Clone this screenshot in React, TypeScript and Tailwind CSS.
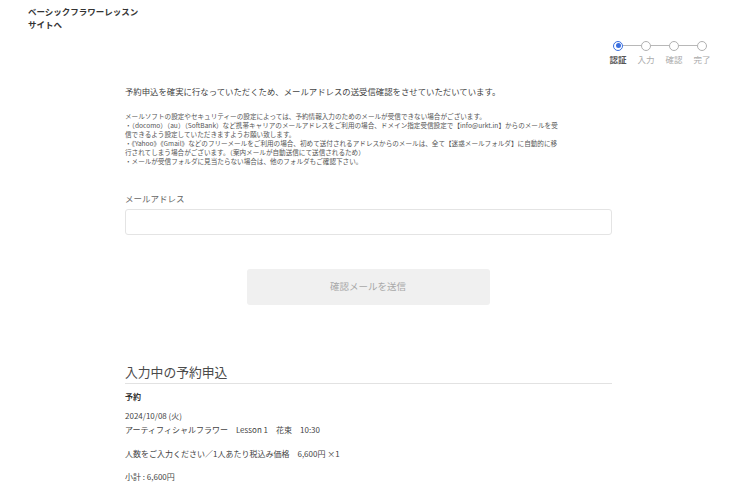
import React from "react";

const steps = ["認証", "入力", "確認", "完了"];

function Stepper() {
  return (
    <div className="flex">
      {steps.map((s, i) => (
        <div key={s} className="w-[28px] flex flex-col items-center">
          <div className="flex items-center w-full h-[11px]">
            <div className={i === 0 ? "flex-1 h-px" : "flex-1 h-px bg-[#b8b8b8]"} />
            {i === 0 ? (
              <div className="w-[10px] h-[10px] rounded-full border border-[#3a6fe0] bg-white flex items-center justify-center">
                <div className="w-[5px] h-[5px] rounded-full bg-[#3a6fe0]" />
              </div>
            ) : (
              <div className="w-[10px] h-[10px] rounded-full border border-[#b0b0b0] bg-white" />
            )}
            <div className={i === steps.length - 1 ? "flex-1 h-px" : "flex-1 h-px bg-[#b8b8b8]"} />
          </div>
          <div
            className={
              i === 0
                ? "mt-[3px] text-[8.5px] leading-[10px] font-bold text-[#555]"
                : "mt-[3px] text-[8.5px] leading-[10px] text-[#aaa]"
            }
          >
            {s}
          </div>
        </div>
      ))}
    </div>
  );
}

const notes = [
  "メールソフトの設定やセキュリティーの設定によっては、予約情報入力のためのメールが受信できない場合がございます。",
  "・（docomo）（au）（SoftBank）など携帯キャリアのメールアドレスをご利用の場合、ドメイン指定受信設定で【info@urkt.in】からのメールを受",
  "信できるよう設定していただきますようお願い致します。",
  "・《Yahoo》《Gmail》などのフリーメールをご利用の場合、初めて送付されるアドレスからのメールは、全て【迷惑メールフォルダ】に自動的に移",
  "行されてしまう場合がございます。（案内メールが自動送信にて送信されるため）",
  "・メールが受信フォルダに見当たらない場合は、他のフォルダもご確認下さい。",
];

export default function App() {
  return (
    <div
      className="w-[750px] h-[500px] overflow-hidden bg-white text-[#333]"
      style={{ fontFamily: '"Noto Sans CJK JP", "Liberation Sans", sans-serif' }}
    >
      <header className="pl-[28px] pt-[5px] text-[8.5px] leading-[13px] font-bold text-[#333]">
        <div>ベーシックフラワーレッスン</div>
        <div>サイトへ</div>
      </header>

      <div className="flex justify-end pr-[34px] mt-[9px]">
        <Stepper />
      </div>

      <main className="ml-[125px] w-[487px] mt-[21px]">
        <p className="text-[8.4px] leading-[12px] text-[#444]">
          予約申込を確実に行なっていただくため、メールアドレスの送受信確認をさせていただいています。
        </p>

        <div className="mt-[15px] text-[6.6px] leading-[9.1px] text-[#555]">
          {notes.map((n) => (
            <div key={n} className="whitespace-nowrap">
              {n}
            </div>
          ))}
        </div>

        <label className="block mt-[25px] text-[8.5px] leading-[12px] text-[#666]">
          メールアドレス
        </label>
        <input
          type="text"
          className="block mt-[5px] w-full h-[26px] border border-[#e4e4e4] rounded-[3px] bg-white outline-none"
        />

        <div className="flex justify-center mt-[34px] pr-[1px]">
          <button className="w-[243px] h-[36px] rounded-[3px] bg-[#f0f0f0] text-[9.5px] text-[#a8a8a8]">
            確認メールを送信
          </button>
        </div>

        <h2 className="mt-[58px] text-[12.8px] leading-[18px] text-[#4a4a4a] pb-[2px] border-b border-[#e2e2e2]">
          入力中の予約申込
        </h2>

        <div className="mt-[7px] text-[8px] leading-[12px] font-bold text-[#333]">予約</div>
        <div className="mt-[6px] text-[8px] leading-[14px] text-[#444]">
          <div>2024/10/08 (火)</div>
          <div>アーティフィシャルフラワー　Lesson 1　花束　10:30</div>
          <div className="mt-[10px]">人数をご入力ください／1人あたり税込み価格　6,600円 ×1</div>
          <div className="mt-[9px]">小計 : 6,600円</div>
        </div>
      </main>
    </div>
  );
}
